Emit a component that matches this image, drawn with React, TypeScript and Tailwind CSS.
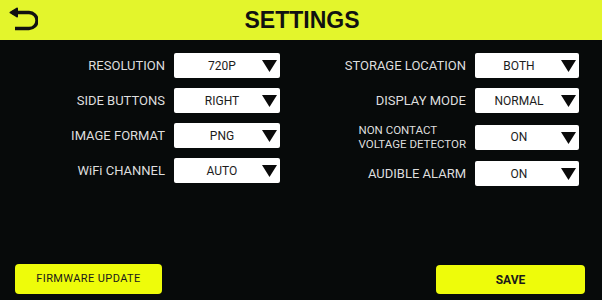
import React from "react";

type Row = { label: string; value: string; small?: boolean };

const leftRows: Row[] = [
  { label: "RESOLUTION", value: "720P" },
  { label: "SIDE BUTTONS", value: "RIGHT" },
  { label: "IMAGE FORMAT", value: "PNG" },
  { label: "WiFi CHANNEL", value: "AUTO" },
];

const rightRows: Row[] = [
  { label: "STORAGE LOCATION", value: "BOTH" },
  { label: "DISPLAY MODE", value: "NORMAL" },
  { label: "NON CONTACT\nVOLTAGE DETECTOR", value: "ON", small: true },
  { label: "AUDIBLE ALARM", value: "ON" },
];

function BackArrow() {
  return (
    <svg
      width="32"
      height="28"
      viewBox="0 0 32 28"
      className="absolute left-[6px] top-[5px]"
    >
      <path
        d="M11 3.5 L4.5 7.5 L11 11.5 Z"
        fill="#111"
        stroke="#111"
        strokeWidth="2"
        strokeLinejoin="round"
      />
      <path
        d="M6 7.5 H23 A8 8 0 0 1 23 23.5 H9"
        fill="none"
        stroke="#111"
        strokeWidth="3.4"
        strokeLinecap="butt"
      />
    </svg>
  );
}

function Select({ value, wide }: { value: string; wide?: boolean }) {
  return (
    <div
      className={`relative flex h-[25px] items-center justify-center rounded-[2px] bg-white text-[12px] text-[#1c1c1c] ${
        wide ? "w-[104px] pr-[16px]" : "w-[106px] pr-[10px]"
      }`}
    >
      {value}
      <svg
        width="15"
        height="12"
        viewBox="0 0 15 12"
        className="absolute right-[3px] top-[7px]"
      >
        <path d="M0 0 H15 L7.5 12 Z" fill="#0a0a0a" />
      </svg>
    </div>
  );
}

function Column({ rows, labelW, wide }: { rows: Row[]; labelW: string; wide?: boolean }) {
  return (
    <div className="flex flex-col gap-[10px]">
      {rows.map((r) => (
        <div key={r.label} className="flex items-center gap-[9px]">
          <div className={`${labelW} flex justify-end`}>
            {r.small ? (
              <div className="whitespace-pre text-left text-[11.5px] leading-[14px] text-[#dedede]">
                {r.label}
              </div>
            ) : (
              <div className="text-right text-[13px] text-[#dedede]">{r.label}</div>
            )}
          </div>
          <Select value={r.value} wide={wide} />
        </div>
      ))}
    </div>
  );
}

export default function App() {
  return (
    <div
      className="flex h-[300px] w-[602px] flex-col bg-[#070a0a]"
      style={{ fontFamily: "Roboto, 'Liberation Sans', sans-serif" }}
    >
      <div className="relative flex h-[40px] items-center justify-center bg-[#e3f52c]">
        <BackArrow />
        <h1
          className="pl-[2px] text-[23px] font-bold leading-none text-[#111]"
          style={{ fontFamily: "'Liberation Sans', Arial, sans-serif" }}
        >
          SETTINGS
        </h1>
      </div>

      <div className="flex pt-[13px]">
        <div className="ml-[15px]">
          <Column rows={leftRows} labelW="w-[150px]" />
        </div>
        <div className="ml-auto mr-[23px]">
          <Column rows={rightRows} labelW="w-[140px]" wide />
        </div>
      </div>

      <div className="mt-auto flex items-end justify-between pb-[6px] pl-[15px] pr-[17px]">
        <button className="h-[30px] w-[147px] rounded-[4px] bg-[#eefc0a] text-[11px] tracking-[0.4px] text-[#1a1a1a]">
          FIRMWARE UPDATE
        </button>
        <button className="h-[29px] w-[149px] rounded-[4px] bg-[#eefc0a] text-[12px] font-bold text-[#1a1a1a]">
          SAVE
        </button>
      </div>
    </div>
  );
}
